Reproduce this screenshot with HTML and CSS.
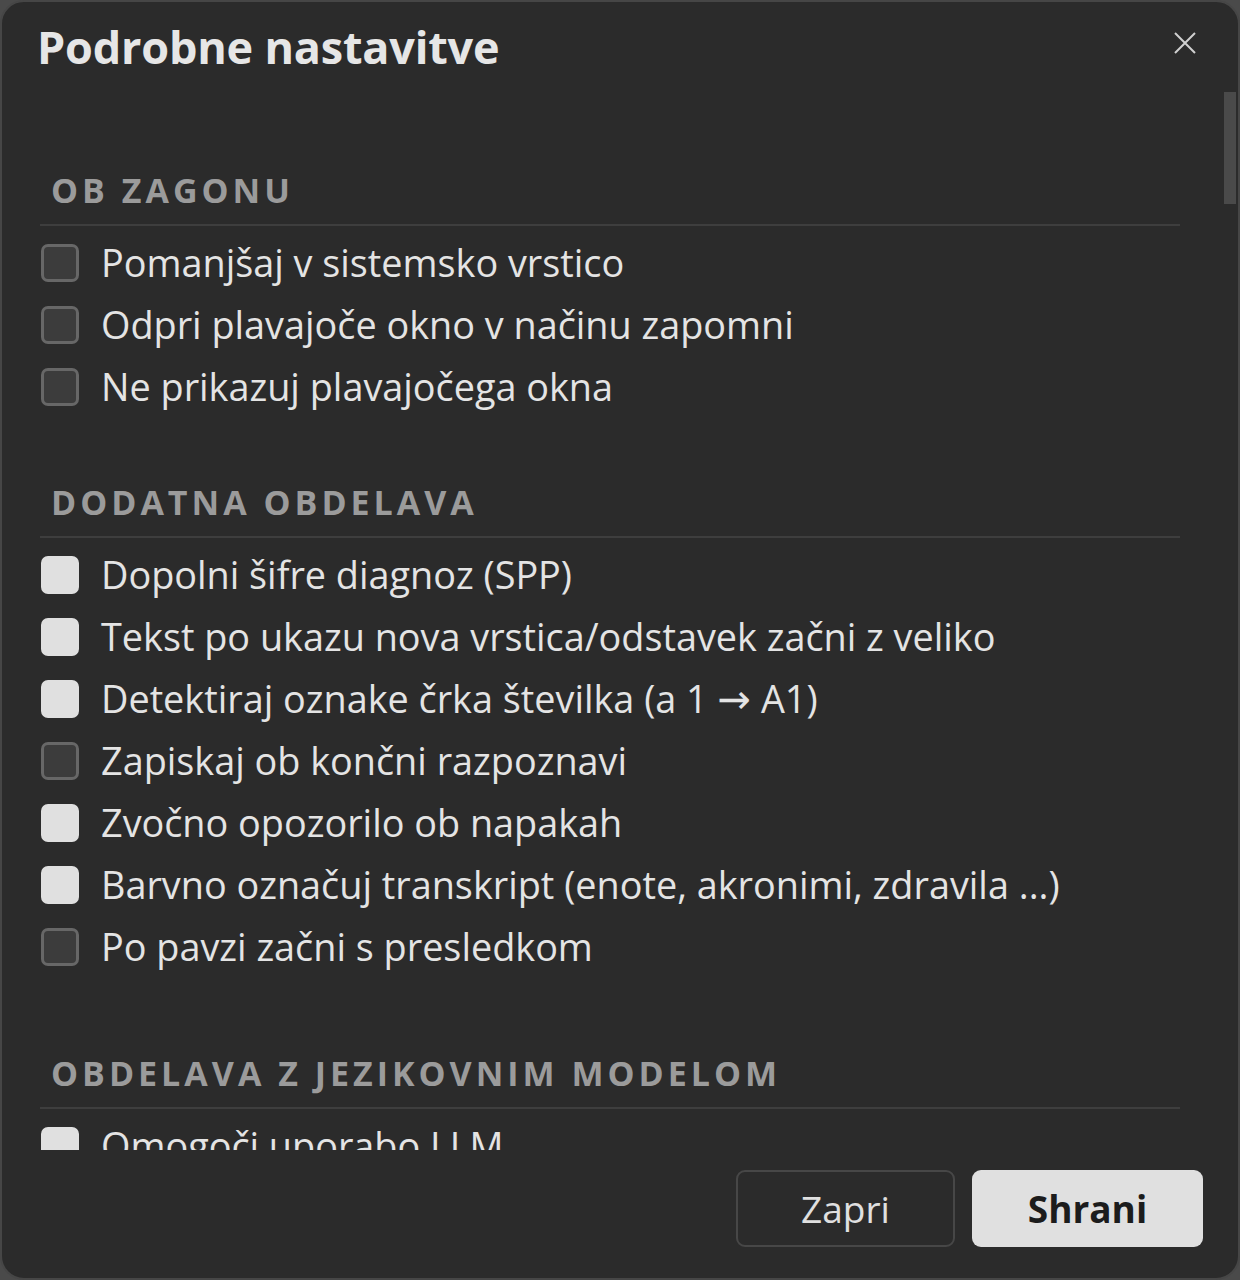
FILE: index.html
```html
<!DOCTYPE html>
<html lang="sl">
<head>
<meta charset="utf-8">
<title>Podrobne nastavitve</title>
<link rel="stylesheet" href="styles.css">
</head>
<body>
<div class="dialog">
  <header class="dialog-header">
    <h1 class="dialog-title">Podrobne nastavitve</h1>
    <button class="close-btn" aria-label="Zapri">
      <svg width="22" height="22" viewBox="0 0 22 22"><path d="M1 1 L21 21 M21 1 L1 21" stroke="#d0d0d0" stroke-width="2" fill="none"/></svg>
    </button>
  </header>
  <div class="content">
    <div class="scroll-thumb"></div>
    <section class="section">
      <h2 class="section-title">OB ZAGONU</h2>
      <ul class="options">
        <li class="option"><span class="box"></span><span class="label">Pomanjšaj v sistemsko vrstico</span></li>
        <li class="option"><span class="box"></span><span class="label">Odpri plavajoče okno v načinu zapomni</span></li>
        <li class="option"><span class="box"></span><span class="label">Ne prikazuj plavajočega okna</span></li>
      </ul>
    </section>
    <section class="section">
      <h2 class="section-title">DODATNA OBDELAVA</h2>
      <ul class="options">
        <li class="option"><span class="box checked"></span><span class="label">Dopolni šifre diagnoz (SPP)</span></li>
        <li class="option"><span class="box checked"></span><span class="label">Tekst po ukazu nova vrstica/odstavek začni z veliko</span></li>
        <li class="option"><span class="box checked"></span><span class="label">Detektiraj oznake črka številka (a 1 <span class="arrow">→</span> A1)</span></li>
        <li class="option"><span class="box"></span><span class="label">Zapiskaj ob končni razpoznavi</span></li>
        <li class="option"><span class="box checked"></span><span class="label">Zvočno opozorilo ob napakah</span></li>
        <li class="option"><span class="box checked"></span><span class="label">Barvno označuj transkript (enote, akronimi, zdravila ...)</span></li>
        <li class="option"><span class="box"></span><span class="label">Po pavzi začni s presledkom</span></li>
      </ul>
    </section>
    <section class="section section-wide">
      <h2 class="section-title">OBDELAVA Z JEZIKOVNIM MODELOM</h2>
      <ul class="options">
        <li class="option"><span class="box checked"></span><span class="label">Omogoči uporabo LLM</span></li>
        <li class="option"><span class="box"></span><span class="label">Samodejno popravi transkript</span></li>
      </ul>
    </section>
  </div>
  <footer class="dialog-footer">
    <button class="btn btn-secondary">Zapri</button>
    <button class="btn btn-primary">Shrani</button>
  </footer>
</div>
</body>
</html>
```

FILE: styles.css
```css
* { box-sizing: border-box; }
html, body { margin: 0; padding: 0; }
body {
  background: #4a4a4a;
  font-family: "Open Sans", "Noto Sans", sans-serif;
  color: #e4e4e4;
}
.dialog {
  position: relative;
  width: 1240px;
  height: 1280px;
  background: #2b2b2b;
  border: 2px solid #464646;
  border-radius: 24px;
  display: flex;
  flex-direction: column;
  overflow: hidden;
}
.dialog-header {
  height: 90px;
  flex: none;
  padding: 16px 0 0 35px;
}
.dialog-title {
  margin: 0;
  font-size: 45px;
  line-height: 58px;
  font-weight: 700;
  color: #e6e6e6;
  letter-spacing: -0.2px;
}
.close-btn {
  position: absolute;
  top: 30px;
  right: 42px;
  padding: 0;
  border: 0;
  background: none;
  width: 22px;
  height: 22px;
  display: flex;
}
.content {
  position: relative;
  flex: 1;
  overflow: hidden;
  padding: 75px 58px 0 38px;
}
.scroll-thumb {
  position: absolute;
  top: 0;
  right: 2px;
  width: 12px;
  height: 112px;
  background: #4a4a4a;
}
.section + .section { margin-top: 61px; }
.section-wide { margin-top: 72px !important; }
.section-title {
  margin: 0;
  padding: 0 0 11px 11px;
  font-size: 34px;
  line-height: 46px;
  font-weight: 700;
  letter-spacing: 4px;
  color: #9b9b9b;
  border-bottom: 2px solid #3e3e3e;
}
.options {
  list-style: none;
  margin: 6px 0 0;
  padding: 0;
}
.option {
  height: 62px;
  display: flex;
  align-items: center;
  gap: 22px;
}
.box {
  flex: none;
  width: 38px;
  height: 38px;
  margin-left: 1px;
  border-radius: 7px;
  background: #3c3c3c;
  border: 3px solid #676767;
}
.box.checked {
  background: #e0e0e0;
  border-color: #e0e0e0;
}
.label {
  font-size: 37.8px;
  line-height: 50px;
  color: #e4e4e4;
  white-space: nowrap;
}
.arrow {
  font-family: "DejaVu Sans", sans-serif;
  font-size: 40px;
  line-height: 1;
}
.dialog-footer {
  flex: none;
  height: 128px;
  display: flex;
  justify-content: flex-end;
  gap: 17px;
  padding: 20px 35px 0 0;
}
.btn {
  height: 77px;
  border-radius: 9px;
  font-family: "Open Sans", "Noto Sans", sans-serif;
  font-size: 37px;
  line-height: 1;
  cursor: pointer;
}
.btn-secondary {
  width: 219px;
  background: #2b2b2b;
  border: 2px solid #474747;
  color: #e0e0e0;
}
.btn-primary {
  width: 231px;
  background: #e0e0e0;
  border: 0;
  color: #1c1c1c;
  font-weight: 700;
}
```
